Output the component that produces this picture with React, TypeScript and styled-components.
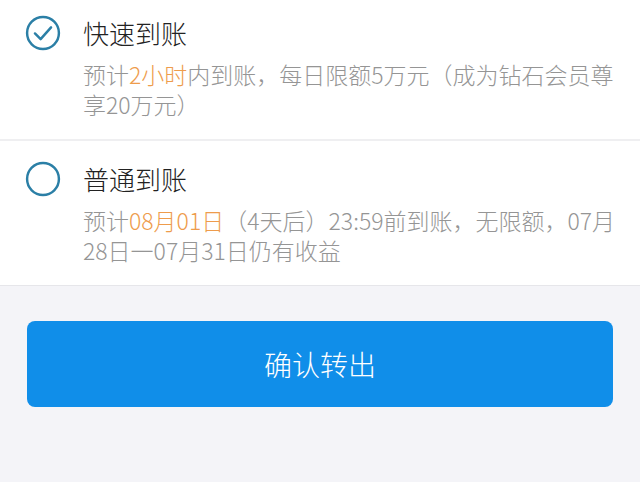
import React from "react";
import styled, { createGlobalStyle } from "styled-components";

const Global = createGlobalStyle`
  html, body { margin: 0; padding: 0; background: #f4f4f8; }
  body { font-family: "Noto Sans CJK SC", "Noto Sans", sans-serif; }
  * { box-sizing: border-box; }
`;

const Page = styled.div`
  width: 640px;
  height: 482px;
  background: #f4f4f8;
  overflow: hidden;
`;

const List = styled.div`
  background: #fff;
  border-bottom: 1px solid #e6e6ea;
`;

const Option = styled.div<{ $top: number; $bottom: number; $divider?: boolean }>`
  display: grid;
  grid-template-columns: 36px 1fr;
  column-gap: 22px;
  align-items: start;
  padding: ${(p) => p.$top}px 14px ${(p) => p.$bottom}px 25px;
  border-bottom: ${(p) => (p.$divider ? "2px solid #efeff1" : "none")};
`;

const Radio = styled.div`
  width: 36px;
  height: 34px;
  display: flex;
  align-items: center;
  justify-content: center;
`;

const Body = styled.div`
  display: flex;
  flex-direction: column;
  gap: 9px;
`;

const Title = styled.div`
  font-size: 26px;
  line-height: 34px;
  font-weight: 300;
  color: #222;
`;

const Desc = styled.div`
  font-size: 23px;
  line-height: 30px;
  font-weight: 300;
  color: #959595;
`;

const Hi = styled.span`
  color: #ee9c4c;
`;

const Footer = styled.div`
  padding: 35px 27px 0 27px;
`;

const Button = styled.button`
  width: 586px;
  height: 86px;
  border: none;
  border-radius: 8px;
  background: #108ee9;
  color: #fff;
  font-family: "Noto Sans CJK SC", sans-serif;
  font-size: 28px;
  font-weight: 300;
  display: flex;
  align-items: center;
  justify-content: center;
  cursor: pointer;
`;

const RadioIcon = ({ checked }: { checked: boolean }) => (
  <svg width="38" height="38" viewBox="0 0 38 38">
    <circle cx="19" cy="19" r="16.8" fill="none" stroke="#2b7fa6" strokeWidth="2.6" />
    {checked && (
      <path d="M10.5 19.5 L16.5 25.5 L27.5 13" fill="none" stroke="#2b7fa6" strokeWidth="2.6" strokeLinecap="round" strokeLinejoin="round" />
    )}
  </svg>
);

export default function App() {
  return (
    <Page>
      <Global />
      <List>
        <Option $top={16} $bottom={20} $divider>
          <Radio>
            <RadioIcon checked />
          </Radio>
          <Body>
            <Title>快速到账</Title>
            <Desc>
              预计<Hi>2小时</Hi>内到账，每日限额5万元（成为钻石会员尊享20万元）
            </Desc>
          </Body>
        </Option>
        <Option $top={21} $bottom={20}>
          <Radio>
            <RadioIcon checked={false} />
          </Radio>
          <Body>
            <Title>普通到账</Title>
            <Desc>
              预计<Hi>08月01日</Hi>（4天后）23:59前到账，无限额，07月28日一07月31日仍有收益
            </Desc>
          </Body>
        </Option>
      </List>
      <Footer>
        <Button>确认转出</Button>
      </Footer>
    </Page>
  );
}
